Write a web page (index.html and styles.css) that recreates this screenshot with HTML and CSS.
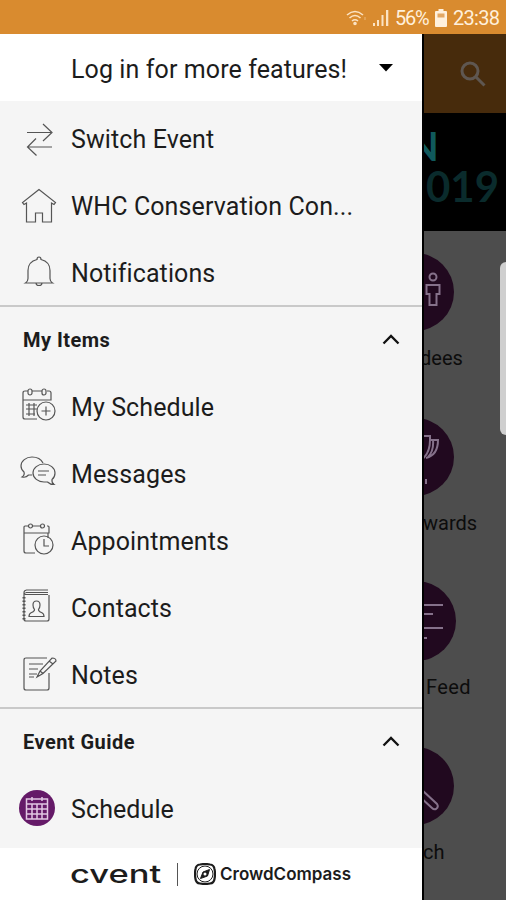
FILE: index.html
```html
<!DOCTYPE html>
<html lang="en">
<head>
    <meta charset="UTF-8">
    <meta name="viewport" content="width=device-width, initial-scale=1.0">
    <title>Event Menu</title>
    <link rel="stylesheet" href="styles.css">
</head>
<body>
    <div class="statusbar">
        <svg class="wifi" width="22" height="18" viewBox="0 0 22 18" fill="none" stroke="#fbe3c4" stroke-width="1.6">
            <path d="M1 6Q9 -1 17 6M3.500 9Q9 4 14.500 9M6 12Q9 9.500 12 12"/>
            <circle cx="9" cy="14.500" r="1" fill="#fbe3c4"/>
            <path d="M19 8v3" stroke-width="1" opacity=".5"/>
        </svg>
        <svg class="signal" width="18" height="18" viewBox="0 0 18 18" fill="#fbe3c4">
            <path d="M1 14h2v3H1zM5 11h2v6H5zM9.500 6h2v11h-2zM14 1h2.300v16H14z"/>
        </svg>
        <span class="percent">56%</span>
        <svg class="battery" width="12" height="18" viewBox="0 0 12 18">
            <path d="M3.500 0h5v2H11q1 0 1 1v14q0 1-1 1H1q-1 0-1-1V3q0-1 1-1h2.500z" fill="#fff0dc"/>
            <path d="M2.500 4.500h7v4h-7z" fill="#e3a763"/>
        </svg>
        <span class="clock">23:38</span>
    </div>

    <div class="screen">
        <div class="drawer">
            <div class="login">
                <span>Log in for more features!</span>
                <svg width="14" height="8" viewBox="0 0 14 8"><path d="M0 0h14L7 7.500z" fill="#000"/></svg>
            </div>

            <ul class="menu">
                <li>
                    <svg width="36" height="36" viewBox="0 0 36 36"><path d="M8 12.500h24M24 4l9 8.500-9 8.500M33 27H8.500M17 18.500L8.500 27l9 8.500"/></svg>
                    <span>Switch Event</span>
                </li>
                <li>
                    <svg width="36" height="36" viewBox="0 0 36 36"><path d="M20 2.500L3.500 15.500l1.500 2 2.500-1.500v19h9V26h7v9h9V16l2.500 1.500 1.500-2z"/></svg>
                    <span>WHC Conservation Con...</span>
                </li>
                <li>
                    <svg width="36" height="36" viewBox="0 0 36 36"><path d="M18 5.500q0-2.500 2-2.500t2 2.500c6 1.500 9 5 9 11v8q0 3 2.500 4.500H6.500Q9 27.500 9 24.500v-8c0-6 3-9.500 9-11zM17 29q0 2.500 3 2.500t3-2.500"/></svg>
                    <span>Notifications</span>
                </li>
            </ul>

            <div class="section">
                <h3>My Items</h3>
                <svg width="18" height="11" viewBox="0 0 18 11"><path d="M1.500 9.500L9 2l7.500 7.500"/></svg>
            </div>
            <ul class="menu items">
                <li>
                    <svg width="36" height="36" viewBox="0 0 36 36"><path d="M27 3h2q2 0 2 2v7H3V5q0-2 2-2h3M12 3h10M3 12v17q0 2 2 2h12M6 17h11M6 21h11M6 26h9M9 15v13M14 15v13"/><rect x="8" y="1" width="4" height="6" rx="2"/><rect x="22" y="1" width="4" height="6" rx="2"/><circle cx="26" cy="23" r="9"/><path d="M26 18.500v9M21.500 23h9"/></svg>
                    <span>My Schedule</span>
                </li>
                <li>
                    <svg width="36" height="36" viewBox="0 0 36 36"><path d="M12 20H8.500Q6 23 2 22q3-2 2-5-3-2.500-3-6C1 6 6 2 12 2c5 0 9 2 11 6"/><path d="M24 9c6 0 11 4 11 9 0 3-1 5-3 6.500q-.500 3 2 5-4 0-6.500-2.500H24c-6 0-11-4-11-9s5-9 11-9zM18 16h11M18 20h8"/></svg>
                    <span>Messages</span>
                </li>
                <li>
                    <svg width="36" height="36" viewBox="0 0 36 36"><path d="M9 4H5q-1 0-1 1v6h25V5q0-1-1-1h-1M12 4h9M4 11v18q0 2 2 2h9M28 11v5"/><circle cx="10.500" cy="4" r="2"/><circle cx="22.500" cy="4" r="2"/><circle cx="24" cy="23" r="9"/><path d="M24 17v7h5"/></svg>
                    <span>Appointments</span>
                </li>
                <li>
                    <svg width="36" height="36" viewBox="0 0 36 36"><path d="M28 5.500H6.500q-2.500 0-2.500-2T6.500 1H28M5.500 3.500H28M4 4v26q0 2 2 2h21q2 0 2-2V6"/><path d="M4 8v23" stroke-width="3" stroke-dasharray="1.500 2"/><path d="M14.500 20.500q0 2-3 3-2.500 1-2.500 4h15q0-3-2.500-4-3-1-3-3 1.500-2 1.500-4.500 0-4-3.500-4T13 16q0 2.500 1.500 4.500z"/></svg>
                    <span>Contacts</span>
                </li>
                <li>
                    <svg width="36" height="36" viewBox="0 0 36 36"><path d="M27 2H6Q4 2 4 4v28q0 2 2 2h21q2 0 2-2V17M9 8h14M9 13h9M9 18h8M9 21h5M17 21l3-6L32 2q4 0 4 3L23 17.500zM29 5l4 3M20 15l3 2.500"/></svg>
                    <span>Notes</span>
                </li>
            </ul>

            <div class="section">
                <h3>Event Guide</h3>
                <svg width="18" height="11" viewBox="0 0 18 11"><path d="M1.500 9.500L9 2l7.500 7.500"/></svg>
            </div>
            <ul class="menu guide">
                <li>
                    <svg class="round" width="36" height="36" viewBox="0 0 36 36"><circle cx="18" cy="18" r="18"/><path d="M7.500 9h21v20h-21zM7.500 14h21M7.500 19h21M7.500 24h21M13 14v15M18 14v15M23 14v15M13 7v4M23 7v4"/></svg>
                    <span>Schedule</span>
                </li>
            </ul>

            <div class="brand">
                <span class="cvent">cvent</span>
                <span class="bar"></span>
                <svg width="22" height="22" viewBox="0 0 22 22" fill="none" stroke="#1c1c1c"><path stroke-width="2.200" d="M6 1.500Q11 .5 16 1.500 20 2 20.500 6q1 5 0 10-.500 4-4.500 4.500-5 1-10 0Q2 20 1.500 16q-1-5 0-10Q2 2 6 1.500z"/><circle cx="11" cy="11" r="8" stroke-width="1"/><path d="M15.500 6.500l-2 6.500-7 2.500 2.500-6.500z" fill="#1c1c1c"/><circle cx="11" cy="11" r="1.500" fill="#fff" stroke="none"/></svg>
                <span class="crowd">CrowdCompass</span>
            </div>
        </div>

        <div class="page">
            <div class="appbar">
                <svg width="26" height="26" viewBox="0 0 26 26" fill="none" stroke="#5f5751" stroke-width="3"><circle cx="10" cy="10" r="8"/><path d="M16 16l8.500 8.500"/></svg>
            </div>
            <div class="banner">
                <div class="line1">N</div>
                <div class="line2">019</div>
            </div>
            <div class="tiles">
                <div class="tile">
                    <svg width="78" height="78" viewBox="0 0 78 78"><circle class="disc" cx="39" cy="39" r="39"/><circle cx="57" cy="24" r="3.500"/><path d="M50.500 32h13v9h-3v11h-7V41h-3z"/></svg>
                    <p class="cut-d">dees</p>
                </div>
                <div class="tile">
                    <svg width="78" height="78" viewBox="0 0 78 78"><circle class="disc" cx="39" cy="39" r="39"/><path d="M36 18h18v4q0 16-12 22M54 22h8q0 15-12 18M57 22q1 11-5 17M50 61v5" /></svg>
                    <p>wards</p>
                </div>
                <div class="tile">
                    <svg width="80" height="78" viewBox="0 0 80 78"><circle class="disc" cx="40" cy="39" r="40"/><path d="M36 23h31M36 32h21M36 46h31M48 56h3"/></svg>
                    <p class="cut-f">Feed</p>
                </div>
                <div class="tile">
                    <svg width="78" height="78" viewBox="0 0 78 78"><circle class="disc" cx="39" cy="39" r="39"/><path d="M44 41l17 16q2 3-1 5-2 1-4-1L42 48"/></svg>
                    <p>ch</p>
                </div>
            </div>
        </div>
        <div class="edge-handle"></div>
    </div>
</body>
</html>
```
FILE: styles.css
```css
* {
    box-sizing: border-box;
}

body {
    margin: 0;
    width: 506px;
    height: 900px;
    overflow: hidden;
    font-family: Roboto, "Liberation Sans", sans-serif;
    color: #1c1c1c;
}

/* Status bar */
.statusbar {
    height: 34px;
    padding: 1px 6px 0 0;
    background: #d98b2f;
    color: #fff0dc;
    display: flex;
    align-items: center;
    justify-content: flex-end;
    font-size: 20px;
}

.wifi {
    margin-right: 4px;
}

.signal {
    margin-right: 5px;
}

.percent {
    width: 35px;
    letter-spacing: -1.2px;
}

.battery {
    margin: 0 6px 0 5px;
}

.clock {
    width: 47px;
    letter-spacing: -0.7px;
}

.screen {
    display: flex;
    height: 866px;
    position: relative;
}

/* Drawer */
.drawer {
    width: 424px;
    flex: none;
    display: flex;
    flex-direction: column;
    background: #f5f5f5;
    border-right: 2px solid #000;
}

.login {
    height: 67px;
    flex: none;
    padding: 3px 29px 0 71px;
    background: #fff;
    display: flex;
    align-items: center;
    justify-content: space-between;
    font-size: 25px;
    letter-spacing: 0.1px;
}

.login svg {
    margin-top: -2px;
}

.menu {
    list-style: none;
    margin: 0;
    padding: 0;
}

.login + .menu {
    padding-top: 3px;
}

.menu li {
    height: 67px;
    padding-left: 19px;
    display: flex;
    align-items: center;
    gap: 16px;
    font-size: 25px;
    letter-spacing: 0.1px;
    white-space: nowrap;
}

.menu li span {
    padding-top: 4px;
}

.menu svg {
    fill: none;
    stroke: #555;
    stroke-width: 1.2;
    overflow: visible;
}

.items li {
    padding-left: 20px;
    gap: 15px;
}

.guide {
    height: 74px;
}

.menu .round circle {
    fill: #651a68;
    stroke: none;
}

.menu .round path {
    stroke: #e2c8e3;
    stroke-width: 1.5;
}

.section {
    height: 67px;
    padding: 1px 22px 0 23px;
    border-top: 2px solid #c9c9c9;
    display: flex;
    align-items: center;
    justify-content: space-between;
}

.section h3 {
    margin: 0;
    font-size: 20px;
    font-weight: 700;
    letter-spacing: 0.45px;
}

.section svg {
    margin-top: -2px;
    fill: none;
    stroke: #111;
    stroke-width: 2.3;
}

.brand {
    flex: 1;
    padding-left: 70px;
    background: #fff;
    display: flex;
    align-items: center;
    font-family: Inter, sans-serif;
}

.cvent {
    width: 91px;
    font-size: 25px;
    font-weight: 500;
    transform: scaleX(1.38);
    transform-origin: left;
}

.bar {
    width: 1px;
    height: 23px;
    margin: 0 16px;
    background: #555;
}

.crowd {
    margin-left: 4px;
    font-size: 17px;
    font-weight: 600;
}

/* Dimmed page behind the drawer */
.page {
    flex: 1;
    min-width: 0;
    overflow: hidden;
    background: #4d4d4d;
}

.appbar {
    height: 79px;
    padding-right: 20px;
    background: #472b0c;
    display: flex;
    align-items: center;
    justify-content: flex-end;
}

.banner {
    height: 118px;
    padding-top: 13px;
    background: #000;
    font-family: Lato, sans-serif;
    font-weight: 700;
    font-size: 42px;
    line-height: 40px;
}

.line1 {
    margin-left: -16px;
    font-size: 40px;
    color: #10595c;
}

.line2 {
    margin-left: 2px;
    color: #0a2b2c;
}

.tiles {
    padding-top: 22px;
}

.tile {
    height: 164.7px;
}

.tile svg {
    display: block;
    margin-left: -48px;
    fill: none;
    stroke: #85718a;
    stroke-width: 2;
}

.tile .disc {
    fill: #21091f;
    stroke: none;
}

.tile p {
    margin: 15px 0 0 -1px;
    font-size: 20px;
    line-height: 24px;
    color: #0c0c0c;
}

.tile .cut-d {
    margin-left: -4px;
}

.tile .cut-f {
    margin-left: 2px;
    letter-spacing: 0.4px;
}

.edge-handle {
    position: absolute;
    right: 0;
    top: 228px;
    width: 6px;
    height: 173px;
    border-radius: 6px 0 0 6px;
    background: #cfcfcf;
}
```
